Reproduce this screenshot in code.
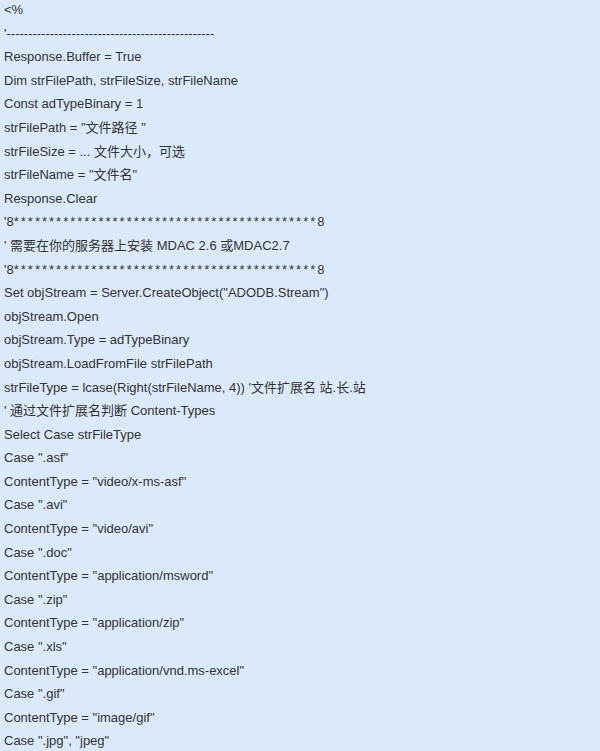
const stars = "*******************************************";

const lines: React.ReactNode[] = [
  "<%",
  "'------------------------------------------------",
  "Response.Buffer = True",
  "Dim strFilePath, strFileSize, strFileName",
  "Const adTypeBinary = 1",
  'strFilePath = "文件路径 "',
  "strFileSize = ... 文件大小，可选",
  'strFileName = "文件名"',
  "Response.Clear",
  <>
    '8<span className="tracking-[2px]">{stars}</span>8
  </>,
  "' 需要在你的服务器上安装 MDAC 2.6 或MDAC2.7",
  <>
    '8<span className="tracking-[2px]">{stars}</span>8
  </>,
  'Set objStream = Server.CreateObject("ADODB.Stream")',
  "objStream.Open",
  "objStream.Type = adTypeBinary",
  "objStream.LoadFromFile strFilePath",
  "strFileType = lcase(Right(strFileName, 4)) '文件扩展名 站.长.站",
  "' 通过文件扩展名判断 Content-Types",
  "Select Case strFileType",
  'Case ".asf"',
  'ContentType = "video/x-ms-asf"',
  'Case ".avi"',
  'ContentType = "video/avi"',
  'Case ".doc"',
  'ContentType = "application/msword"',
  'Case ".zip"',
  'ContentType = "application/zip"',
  'Case ".xls"',
  'ContentType = "application/vnd.ms-excel"',
  'Case ".gif"',
  'ContentType = "image/gif"',
  'Case ".jpg", "jpeg"',
];

export default function App() {
  return (
    <main className="h-[751px] w-[600px] overflow-hidden bg-[#dbeafa] pl-[4px] font-['Liberation_Sans','Noto_Sans_CJK_SC',sans-serif] text-[13px] text-[#333333]">
      <div className="-mt-[2px]">
        {lines.map((line, i) => (
          <p key={i} className="h-[23.6px] leading-[23.6px] whitespace-pre">
            {line}
          </p>
        ))}
      </div>
    </main>
  );
}
